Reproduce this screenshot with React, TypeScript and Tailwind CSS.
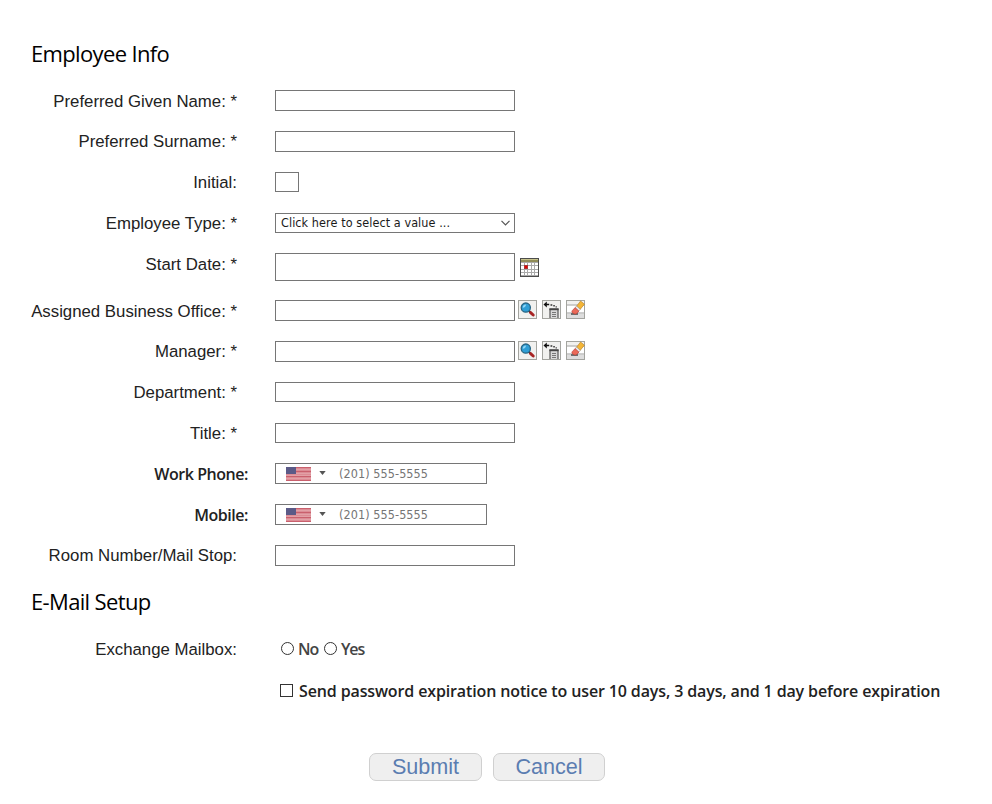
import React from "react";

const humanist = "font-['Trebuchet_MS','Open_Sans',sans-serif]";
const arial = "font-['Liberation_Sans',Arial,sans-serif]";
const tahoma = "font-['Tahoma','DejaVu_Sans_Condensed','Noto_Sans',sans-serif]";
const box = "block border border-[#767676] bg-white outline-none";

function Row({ label, height, nudge, strong, children }: {
  label: string; height: string; nudge?: boolean; strong?: boolean; children: React.ReactNode;
}) {
  return (
    <div className={`flex items-start ${height}`}>
      <div
        className={`shrink-0 whitespace-nowrap text-right leading-5 text-[#222] ${nudge ? "pt-px" : ""} ${
          strong ? `mr-[27px] w-[248px] text-[16px] font-semibold tracking-[-0.45px] ${humanist}` : `mt-px mr-[38px] w-[237px] text-[16.8px] ${arial}`
        }`}
      >
        {label}
      </div>
      {children}
    </div>
  );
}

function CalendarIcon() {
  return (
    <svg width="19" height="19" viewBox="0 0 19 19" shapeRendering="crispEdges">
      <rect width="19" height="19" fill="#4c4c4c" />
      <rect x="1" y="1" width="17" height="3" fill="#918d58" />
      <rect x="1" y="1" width="17" height="1" fill="#c7c38c" />
      <rect x="1" y="4" width="17" height="14" fill="#aaa" />
      {[5, 8, 12, 15].map((y) =>
        [1, 5, 8, 12, 15].map((x) => (
          <rect key={`${x}-${y}`} x={x} y={y} width={x === 8 || x === 1 || x === 15 ? 3 : 2} height={y === 8 ? 3 : 2} fill="#fff" />
        )),
      )}
      <rect x="4" y="7" width="4" height="4" fill="#a33" />
      <rect x="5" y="8" width="2" height="2" fill="#e00000" />
    </svg>
  );
}

function Frame({ children }: { children: React.ReactNode }) {
  return (
    <svg width="19" height="19" viewBox="0 0 19 19">
      <rect x=".5" y=".5" width="18" height="18" fill="#f1f1ef" stroke="#a3a49f" />
      {children}
    </svg>
  );
}

function LookupIcons() {
  return (
    <div className="ml-[3px] flex gap-[5px]">
      <Frame>
        <path d="M10.5 10.5l2 2" stroke="#333" strokeWidth="2" />
        <path d="M12.6 12.6l2.6 2.4" stroke="#a82424" strokeWidth="3" strokeLinecap="round" />
        <circle cx="7.8" cy="7.6" r="4.6" fill="#2f9ed5" stroke="#286685" strokeWidth="1.3" />
        <path d="M4.8 7.7a3.3 3.3 0 0 1 3.3-3.3c-.3 2.1-1.2 2.9-3.3 3.3z" fill="#8fd6f5" />
      </Frame>
      <Frame>
        <path d="M1.5 4.5l3.3-3v2.2h2.4v1.6H4.8v2.2z" fill="#111" />
        <path d="M8.5 4.2h1.8v1.5H8.5zM11.3 5h1.5v1.5h-1.5zM13.6 6.3h1.2v1.2h-1.2z" fill="#333" />
        <path d="M8 18V9h8v9" fill="#d8d8d8" stroke="#555" strokeWidth="1.2" />
        <path d="M7.4 9.3h9.2" stroke="#444" strokeWidth="1.8" />
        <path d="M10 12.5h4M10 14.5h4M10 16.5h4" stroke="#777" />
      </Frame>
      <Frame>
        <path d="M1 5.5h17v7H1z" fill="#fff" />
        <path d="M1 5h17M1 13h17" stroke="#a5a5a5" />
        <path d="M1 14h17v4H1z" fill="#ddd" />
        <path d="M5 14h7" stroke="#555" strokeWidth="1.6" />
        <path d="M10.4 6.4L14.6 1l3.8 3.2L13.9 9.7z" fill="#f4b637" stroke="#b47b1c" strokeWidth=".6" />
        <path d="M9 7.8l1.6-1.8 3.7 3.4-1.6 1.8z" fill="#eee" stroke="#888" strokeWidth=".5" />
        <path d="M6 10.9l3.1-3.3 3.9 3.6-2.6 2.5c-1.8 1-5.2-1.2-4.4-2.8z" fill="#ea6a58" stroke="#b63531" strokeWidth=".6" />
      </Frame>
    </div>
  );
}

function Flag() {
  return (
    <svg width="25" height="14" viewBox="0 0 25 14" shapeRendering="crispEdges">
      <rect width="25" height="14" fill="#dc8c95" />
      <path d="M0 .5h25M0 13.5h25M0 9.5h25M10 4.5h15" stroke="#c9606d" />
      <path d="M10 2.5h15M10 6.5h15M0 8.5h25M0 11.5h25" stroke="#e2a0a6" />
      <rect width="10" height="7" fill="#5b5a87" />
    </svg>
  );
}

function Phone() {
  return (
    <div className="flex h-[21px] w-[212px] items-center border border-[#767676] bg-white pl-[10px]">
      <Flag />
      <svg className="mb-px ml-[8px]" width="7" height="4"><path d="M.3 0h6.4L3.5 4z" fill="#555" /></svg>
      <input
        className={`mt-px ml-[13px] w-[130px] text-[12.5px] leading-4 tracking-[0.08px] outline-none placeholder:text-[#757575] ${tahoma}`}
        placeholder="(201) 555-5555"
      />
    </div>
  );
}

export default function App() {
  return (
    <form className="h-[804px] w-[992px] overflow-hidden bg-white" onSubmit={(e) => e.preventDefault()}>
      <h2 className={`pt-[38px] pb-px pl-[31px] text-[22px] leading-[30px] tracking-[-0.65px] text-black ${humanist}`}>Employee Info</h2>
      <div className="pt-[21px]">
        <Row label="Preferred Given Name: *" height="h-[41px]" nudge><input className={`${box} h-[21px] w-[240px]`} /></Row>
        <Row label="Preferred Surname: *" height="h-[41px]"><input className={`${box} h-[21px] w-[240px]`} /></Row>
        <Row label="Initial:" height="h-[41px]"><input className={`${box} h-[20px] w-[24px]`} /></Row>
        <Row label="Employee Type: *" height="h-[40px]">
          <button type="button" className={`${box} flex! h-[20px] w-[240px] items-center justify-between pr-[4px] pl-[5px] text-[12.5px] leading-4 tracking-[0.08px] text-[#1a1a1a] ${tahoma}`}>
            <span>Click here to select a value ...</span>
            <svg width="9" height="6" viewBox="0 0 9 6" fill="none"><path d="M.5 .8l4 4 4-4" stroke="#555" strokeWidth="1.2" /></svg>
          </button>
        </Row>
        <Row label="Start Date: *" height="h-[47px]" nudge>
          <input className={`${box} h-[28px] w-[240px]`} />
          <div className="mt-[5px] ml-[5px]"><CalendarIcon /></div>
        </Row>
        <Row label="Assigned Business Office: *" height="h-[41px]" nudge><input className={`${box} h-[21px] w-[240px]`} /><LookupIcons /></Row>
        <Row label="Manager: *" height="h-[41px]"><input className={`${box} h-[21px] w-[240px]`} /><LookupIcons /></Row>
        <Row label="Department: *" height="h-[41px]"><input className={`${box} h-[20px] w-[240px]`} /></Row>
        <Row label="Title: *" height="h-[40px]"><input className={`${box} h-[20px] w-[240px]`} /></Row>
        <Row label="Work Phone:" height="h-[41px]" nudge strong><Phone /></Row>
        <Row label="Mobile:" height="h-[41px]" nudge strong><Phone /></Row>
        <Row label="Room Number/Mail Stop:" height="h-[41px]"><input className={`${box} h-[21px] w-[240px]`} /></Row>
      </div>
      <h2 className={`pb-px pl-[31px] text-[22px] leading-[30px] tracking-[-0.65px] text-black ${humanist}`}>E-Mail Setup</h2>
      <div className="pt-[22px]">
        <Row label="Exchange Mailbox:" height="h-[41px]">
          <div className={`flex items-center pl-[6px] text-[16px] leading-5 font-semibold tracking-[-1.1px] text-[#444] ${humanist}`}>
            <input type="radio" name="mailbox" className="mb-px size-[13px] appearance-none rounded-full border border-[#333]" />
            <span className="ml-[4px] w-[20px]">No</span>
            <input type="radio" name="mailbox" className="mb-px ml-[6px] size-[13px] appearance-none rounded-full border border-[#333]" />
            <span className="ml-[4px]">Yes</span>
          </div>
        </Row>
        <label className={`flex items-center pl-[280px] text-[16px] leading-[22px] font-semibold tracking-[-0.13px] whitespace-nowrap text-[#222] ${humanist}`}>
          <input type="checkbox" className="mr-[6px] mb-px size-[13px] appearance-none border border-[#333]" />
          Send password expiration notice to user 10 days, 3 days, and 1 day before expiration
        </label>
      </div>
      <div className={`flex gap-[11px] pt-[51px] pl-[369px] text-[21.6px] leading-[26px] text-[#5b7db1] ${arial}`}>
        <button type="submit" className="h-[28px] w-[113px] rounded-[7px] border border-[#d0d0d0] bg-[#efefef]">Submit</button>
        <button type="button" className="h-[28px] w-[112px] rounded-[7px] border border-[#d0d0d0] bg-[#efefef]">Cancel</button>
      </div>
    </form>
  );
}
